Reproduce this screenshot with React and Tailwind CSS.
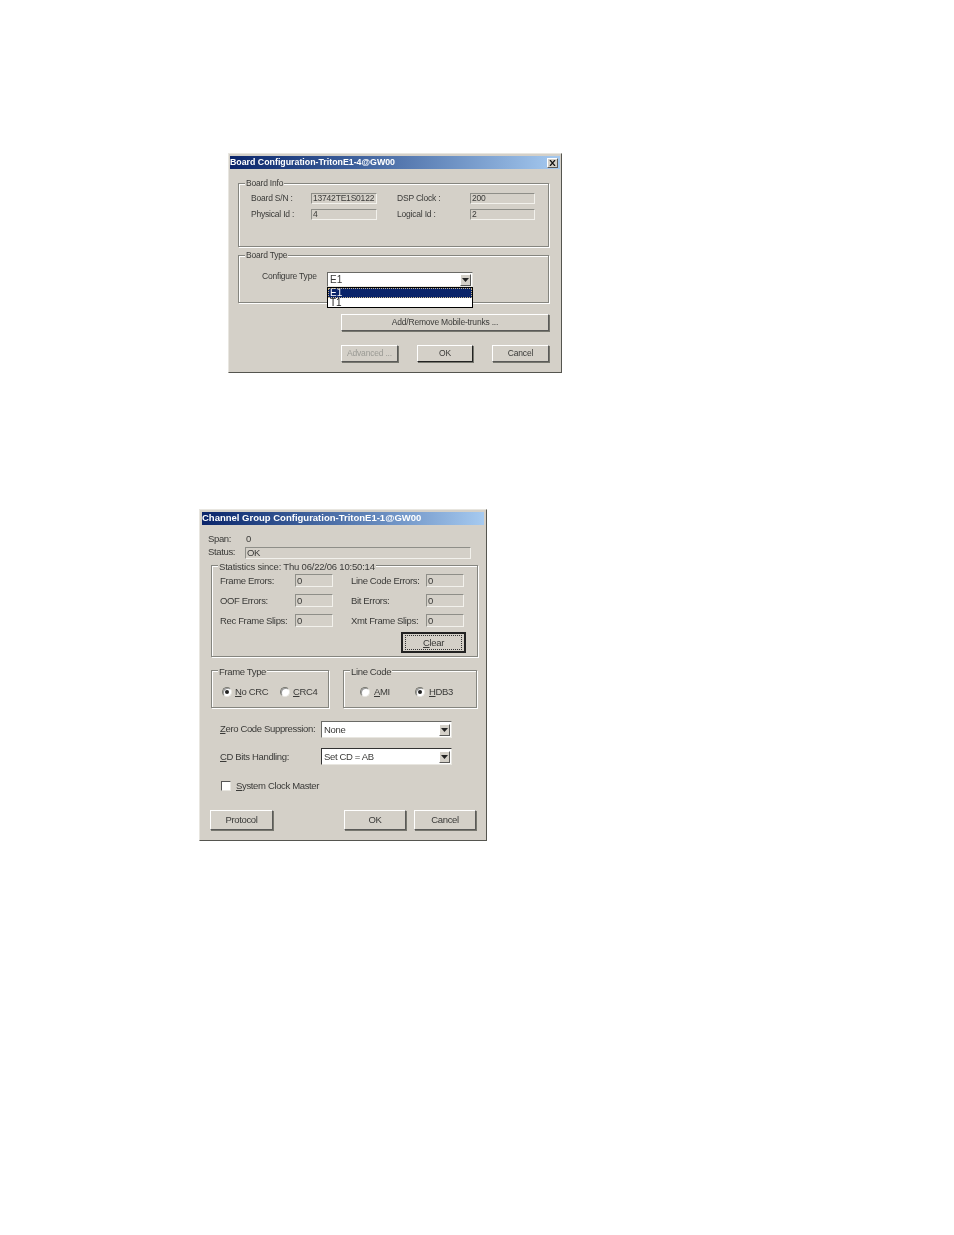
const bevel = "border border-t-white border-l-white border-r-[#5a5a58] border-b-[#5a5a58]";

function Dialog({ className, title, titleClass, close, children }) {
  return (
    <div className={`bg-[#d4d0c8] border border-t-[#e8e6e0] border-l-[#e8e6e0] border-r-[#55554f] border-b-[#55554f] pt-[2px] font-['Liberation_Sans',sans-serif] text-[#3a3a38] blur-[0.3px] ${className}`}>
      <div className="h-[13px] flex items-center justify-between bg-gradient-to-r from-[#0a246a] to-[#a6caf0] pr-[2px]">
        <span className={`text-white whitespace-nowrap ${titleClass}`}>{title}</span>
        {close && (
          <span className={`w-[11px] h-[10px] bg-[#d4d0c8] flex items-center justify-center ${bevel}`}>
            <svg width="7" height="6" viewBox="0 0 7 6"><path d="M1 0l5 6M6 0L1 6" stroke="#111" strokeWidth="1.2" fill="none" /></svg>
          </span>
        )}
      </div>
      {children}
    </div>
  );
}

function Group({ label, className, labelClass, children }) {
  return (
    <div className={`relative border border-[#85857f] shadow-[1px_1px_0_#fff,inset_1px_1px_0_#fff] ${className}`}>
      <span className={`absolute left-[6px] bg-[#d4d0c8] px-[1px] leading-[11px] whitespace-nowrap ${labelClass || "-top-[6px]"}`}>{label}</span>
      {children}
    </div>
  );
}

function Field({ value, className }) {
  return (
    <div className={`border border-t-[#8e8e88] border-l-[#8e8e88] border-r-[#f2f1ec] border-b-[#f2f1ec] pl-[1px] flex items-center leading-none whitespace-nowrap overflow-hidden ${className}`}>
      {value}
    </div>
  );
}

function Btn({ children, className, disabled }) {
  return (
    <div className={`bg-[#d4d0c8] shadow-[1px_1px_0_#77776f] flex items-center justify-center whitespace-nowrap ${bevel} ${disabled ? "text-[#9a9a94]" : ""} ${className}`}>
      {children}
    </div>
  );
}

function Arrow({ className }) {
  return (
    <span className={`bg-[#d4d0c8] flex items-center justify-center ${bevel} ${className}`}>
      <svg width="7" height="4" viewBox="0 0 7 4"><path d="M0 0h7L3.500 4z" fill="#222" /></svg>
    </span>
  );
}

function Select({ value, className, children }) {
  return (
    <div className={`relative bg-white border border-t-[#6a6a66] border-l-[#6a6a66] border-r-[#e8e6e0] border-b-[#e8e6e0] flex items-center justify-between pl-[2px] pr-[1px] leading-none ${className}`}>
      <span>{value}</span>
      <Arrow className="w-[11px] h-[12px]" />
      {children}
    </div>
  );
}

function Radio({ checked, className }) {
  return (
    <span className={`w-[10px] h-[10px] rounded-full bg-white border border-t-[#77776f] border-l-[#77776f] border-r-[#e8e6e0] border-b-[#e8e6e0] shadow-[inset_1px_1px_0_#999] flex items-center justify-center shrink-0 ${className || ""}`}>
      {checked && <span className="w-[4px] h-[4px] rounded-full bg-[#222]" />}
    </span>
  );
}

const U = ({ children }) => <span className="underline">{children}</span>;

export default function App() {
  return (
    <div className="w-[954px] h-[1235px] bg-white overflow-hidden pt-[153px]">
      <Dialog
        className="ml-[228px] w-[334px] h-[220px] text-[8.500px] tracking-[-0.2px] px-[1px]"
        title="Board Configuration-TritonE1-4@GW00"
        titleClass="text-[8.800px] font-bold tracking-normal"
        close
      >
        <Group label="Board Info" className="mt-[14px] ml-[8px] w-[311px] h-[64px] pt-[9px] pl-[12px]">
          <div className="grid grid-cols-[60px_66px_93px_65px] grid-rows-[11px_11px] gap-y-[5px] items-center">
            <span>Board S/N :</span>
            <Field value="13742TE1S0122" className="h-[11px] text-[8.500px]" />
            <span className="pl-[20px]">DSP Clock :</span>
            <Field value="200" className="h-[11px]" />
            <span>Physical Id :</span>
            <Field value="4" className="h-[11px]" />
            <span className="pl-[20px]">Logical Id :</span>
            <Field value="2" className="h-[11px]" />
          </div>
        </Group>
        <Group label="Board Type" className="mt-[8px] ml-[8px] w-[311px] h-[48px] pt-[16px] pl-[23px]">
          <div className="flex items-start">
            <span className="w-[65px] text-[8.500px] leading-[9px]">Configure Type</span>
            <Select value="E1" className="w-[146px] h-[15px] text-[10px] tracking-normal">
              <div className="absolute z-10 left-[-1px] top-[14px] w-[146px] h-[21px] bg-white border border-black text-[10px] leading-[9.500px]">
                <div className="h-[9.500px] bg-[#0a246a] text-white outline-1 outline-dotted outline-offset-[-1px] outline-[#c9b78a] pl-[2px]">E1</div>
                <div className="h-[9.500px] text-[#222] pl-[2px]">T1</div>
              </div>
            </Select>
          </div>
        </Group>
        <div className="flex justify-end pr-[11px] mt-[11px]">
          <Btn className="w-[208px] h-[17px] pb-[1px]">Add/Remove Mobile-trunks ...</Btn>
        </div>
        <div className="flex justify-end pr-[11px] mt-[14px] gap-[19px]">
          <Btn disabled className="w-[57px] h-[17px]">Advanced ...</Btn>
          <Btn className="w-[56px] h-[17px] border-r-[#222] border-b-[#222]">OK</Btn>
          <Btn className="w-[57px] h-[17px]">Cancel</Btn>
        </div>
      </Dialog>

      <Dialog
        className="ml-[199px] mt-[136px] w-[288px] h-[332px] text-[9.500px] tracking-[-0.35px] px-[2px]"
        title="Channel Group Configuration-TritonE1-1@GW00"
        titleClass="text-[9.500px] font-bold tracking-normal"
      >
        <div className="flex items-center h-[13px] mt-[8px] pl-[6px]">
          <span className="w-[38px]">Span:</span>
          <span>0</span>
        </div>
        <div className="flex items-center h-[11px] mt-[1px] pl-[6px]">
          <span className="w-[37px]">Status:</span>
          <Field value="OK" className="w-[226px] h-[12px]" />
        </div>
        <Group label="Statistics since: Thu 06/22/06 10:50:14" labelClass="-top-[5px] tracking-[-0.2px]" className="mt-[7px] ml-[9px] w-[267px] h-[92px] pt-[8px] pl-[8px]">
          <div className="grid grid-cols-[75px_38px_93px_38px] auto-rows-[13px] gap-y-[7px] items-center">
            <span className="pt-[2px]">Frame Errors:</span>
            <Field value="0" className="h-[13px]" />
            <span className="pl-[18px] pt-[2px]">Line Code Errors:</span>
            <Field value="0" className="h-[13px]" />
            <span className="pt-[2px]">OOF Errors:</span>
            <Field value="0" className="h-[13px]" />
            <span className="pl-[18px] pt-[2px]">Bit Errors:</span>
            <Field value="0" className="h-[13px]" />
            <span className="pt-[2px]">Rec Frame Slips:</span>
            <Field value="0" className="h-[13px]" />
            <span className="pl-[18px] pt-[2px]">Xmt Frame Slips:</span>
            <Field value="0" className="h-[13px]" />
          </div>
          <div className="flex justify-end pr-[11px] mt-[5px]">
            <div className="w-[65px] h-[21px] border-2 border-[#222] bg-[#d4d0c8] flex items-center justify-center">
              <span className="w-[57px] h-[15px] border border-dotted border-[#333] flex items-center justify-center pt-[2px]"><span><U>C</U>lear</span></span>
            </div>
          </div>
        </Group>
        <div className="flex mt-[13px] ml-[9px] gap-[14px]">
          <Group label="Frame Type" labelClass="-top-[5px]" className="w-[118px] h-[38px] pl-[10px] pt-[15px]">
            <div className="flex items-center h-[11px]">
              <Radio checked />
              <span className="ml-[3px] w-[45px] pt-[2px]"><U>N</U>o CRC</span>
              <Radio />
              <span className="ml-[3px] pt-[2px]"><U>C</U>RC4</span>
            </div>
          </Group>
          <Group label="Line Code" labelClass="-top-[5px]" className="w-[134px] h-[38px] pl-[16px] pt-[15px]">
            <div className="flex items-center h-[11px]">
              <Radio />
              <span className="ml-[4px] w-[41px] pt-[2px]"><U>A</U>MI</span>
              <Radio checked />
              <span className="ml-[4px] pt-[2px]"><U>H</U>DB3</span>
            </div>
          </Group>
        </div>
        <div className="flex items-center mt-[13px] ml-[18px]">
          <span className="w-[101px] whitespace-nowrap"><U>Z</U>ero Code Suppression:</span>
          <Select value="None" className="w-[131px] h-[17px]" />
        </div>
        <div className="flex items-center mt-[10px] ml-[18px]">
          <span className="w-[101px] pt-[2px]"><U>C</U>D Bits Handling:</span>
          <Select value="Set CD = AB" className="w-[131px] h-[17px] border-t-[#333] border-l-[#333]" />
        </div>
        <div className="flex items-center mt-[14px] ml-[19px]">
          <span className="w-[10px] h-[10px] bg-white border border-t-[#555] border-l-[#555] border-r-[#e8e6e0] border-b-[#e8e6e0]" />
          <span className="ml-[5px]"><U>S</U>ystem Clock Master</span>
        </div>
        <div className="flex mt-[17px] ml-[8px]">
          <Btn className="w-[63px] h-[20px]">Protocol</Btn>
          <Btn className="w-[62px] h-[20px] ml-[71px]">OK</Btn>
          <Btn className="w-[62px] h-[20px] ml-[8px]">Cancel</Btn>
        </div>
      </Dialog>
    </div>
  );
}
